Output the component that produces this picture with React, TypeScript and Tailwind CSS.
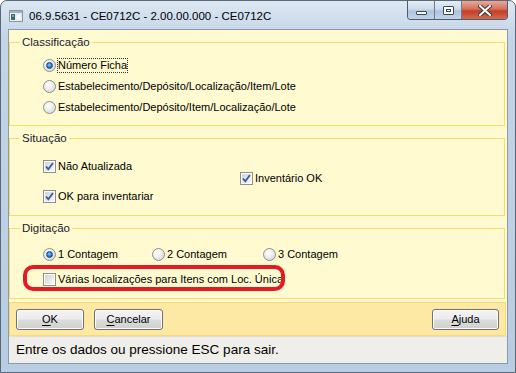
import React from 'react'

const ui = { fontFamily: '"Liberation Sans", Arial, sans-serif' }

function Radio({ checked, label, focus }: { checked?: boolean; label: string; focus?: boolean }) {
  return (
    <div className="flex items-center gap-[1px]">
      <span className="flex h-[13px] w-[13px] items-center justify-center rounded-full border border-[#8e8f8f] bg-[radial-gradient(circle_at_40%_35%,#ffffff_0%,#f2f2f2_35%,#cfcfcf_100%)]">
        {checked && (
          <span className="h-[7px] w-[7px] rounded-full border border-[#1c5180] bg-[radial-gradient(circle_at_45%_40%,#9fd2ff_0%,#2a85d6_45%,#0f4c8a_100%)]" />
        )}
      </span>
      <span
        className={
          focus
            ? 'border border-dotted border-[#333] px-0 leading-[13px]'
            : 'border border-transparent px-0 leading-[13px]'
        }
      >
        {label}
      </span>
    </div>
  )
}

function Check({ checked, label }: { checked?: boolean; label: string }) {
  return (
    <div className="flex items-center gap-[2px]">
      <span className="flex h-[13px] w-[13px] items-center justify-center border border-[#8e8f8f] bg-white p-[1px]">
        <span className="flex h-full w-full items-center justify-center bg-[linear-gradient(135deg,#d4d4d4,#f7f7f7)]">
          {checked && (
            <svg width="9" height="9" viewBox="0 0 9 9">
              <path d="M1 4.5 L3.3 7.2 L8 1" fill="none" stroke="#3a5c9e" strokeWidth="1.8" />
            </svg>
          )}
        </span>
      </span>
      <span className="leading-[13px]">{label}</span>
    </div>
  )
}

function Group({ title, children }: { title: string; children: React.ReactNode }) {
  return (
    <fieldset className="mr-[2px] border border-[#fbd96b]">
      <legend className="ml-[10px] px-[2px] text-[11.5px] leading-[16px] text-[#1b1b2e]">{title}</legend>
      {children}
    </fieldset>
  )
}

function Btn({ u, rest }: { u: string; rest: string }) {
  return (
    <button className="flex h-[21px] w-full items-center justify-center rounded-[3px] border border-[#707070] bg-[linear-gradient(#f3f3f3_0%,#ececec_48%,#dcdcdc_52%,#cfcfcf_100%)] text-[11px] leading-none text-black shadow-[inset_0_0_0_1px_#fcfcfc]">
      <span className="underline underline-offset-2">{u}</span>
      {rest}
    </button>
  )
}

export default function App() {
  return (
    <div
      className="flex h-[373px] w-[516px] flex-col overflow-hidden rounded-t-[7px] border border-[#5a6878] bg-[linear-gradient(#dce7f2_0%,#c3d5e8_10%,#b8cce2_100%)]"
      style={ui}
    >
      {/* title bar */}
      <div className="flex h-[28px] shrink-0 items-start justify-between pl-[8px] pr-[7px]">
        <div className="flex items-center gap-[6px] pt-[7px]">
          <svg width="14" height="12" viewBox="0 0 14 12">
            <rect x="0.5" y="0.5" width="13" height="11" fill="#f4f6f8" stroke="#8a96a2" />
            <rect x="1" y="1" width="12" height="2" fill="#9fb3c6" />
            <rect x="2" y="4" width="4" height="6" fill="#2f6d70" />
            <rect x="3" y="5" width="2" height="2" fill="#6fb0a8" />
            <rect x="7" y="4" width="5" height="6" fill="#ffffff" stroke="#c6ced6" strokeWidth="0.6" />
          </svg>
          <span className="text-[11.5px] leading-[16px] text-black">06.9.5631 - CE0712C - 2.00.00.000 - CE0712C</span>
        </div>
        <div className="flex h-[19px] overflow-hidden rounded-b-[4px] border border-t-0 border-[#4f5b6a]">
          <div className="flex w-[27px] items-center justify-center border-r border-[#6d7b8b] bg-[linear-gradient(#e5edf6_0%,#ccdbeb_45%,#aec4dc_55%,#c2d4e8_100%)]">
            <span className="mt-[5px] h-[4px] w-[11px] rounded-[1px] border border-[#3c4a5a] bg-white" />
          </div>
          <div className="flex w-[27px] items-center justify-center border-r border-[#6d7b8b] bg-[linear-gradient(#e5edf6_0%,#ccdbeb_45%,#aec4dc_55%,#c2d4e8_100%)]">
            <span className="flex h-[9px] w-[11px] items-center justify-center rounded-[1px] border border-[#3c4a5a] bg-white">
              <span className="h-[3px] w-[5px] border border-[#3c4a5a]" />
            </span>
          </div>
          <div className="flex w-[45px] items-center justify-center bg-[linear-gradient(#eaa898_0%,#d5705c_45%,#c33f2a_55%,#d46a4c_100%)]">
            <svg width="14" height="11" viewBox="0 0 14 11">
              <path d="M2 1 L12 10 M12 1 L2 10" stroke="#3c3c3c" strokeWidth="4" strokeLinecap="square" />
              <path d="M2 1 L12 10 M12 1 L2 10" stroke="#ffffff" strokeWidth="2" strokeLinecap="square" />
            </svg>
          </div>
        </div>
      </div>

      {/* client */}
      <div className="mx-[7px] flex flex-1 flex-col border border-[#8a9aaa] bg-[#fffad0]">
        <div className="flex flex-col gap-[4px] pt-[4px] text-[11px] text-black">
          <Group title="Classificação">
            <div className="flex flex-col pt-[5px] pb-[7px] pl-[33px]">
              <div className="flex h-[21px] items-center">
                <Radio checked focus label="Número Ficha" />
              </div>
              <div className="flex h-[21px] items-center">
                <Radio label="Estabelecimento/Depósito/Localização/Item/Lote" />
              </div>
              <div className="flex h-[21px] items-center">
                <Radio label="Estabelecimento/Depósito/Item/Localização/Lote" />
              </div>
            </div>
          </Group>

          <Group title="Situação">
            <div className="flex items-start pt-[10px] pb-[8px] pl-[33px]">
              <div className="flex w-[197px] flex-col gap-[9px]">
                <div className="flex h-[21px] items-center">
                  <Check checked label="Não Atualizada" />
                </div>
                <div className="flex h-[21px] items-center">
                  <Check checked label="OK para inventariar" />
                </div>
              </div>
              <div className="mt-[12px] flex h-[21px] items-center">
                <Check checked label="Inventário OK" />
              </div>
            </div>
          </Group>

          <Group title="Digitação">
            <div className="relative flex flex-col pt-[7px] pb-[5px] pl-[33px]">
              <div className="flex h-[22px] items-center">
                <div className="w-[109px]">
                  <Radio checked label="1 Contagem" />
                </div>
                <div className="w-[111px]">
                  <Radio label="2 Contagem" />
                </div>
                <Radio label="3 Contagem" />
              </div>
              <div className="flex h-[28px] items-center">
                <Check label="Várias localizações para Itens com Loc. Única" />
              </div>
              <div className="pointer-events-none absolute left-[13px] top-[29px] h-[26px] w-[262px] rounded-[10px] border-[4px] border-[#e41b23]" />
            </div>
          </Group>
        </div>

        {/* button bar */}
        <div className="mt-[3px] mr-[1px] flex h-[34px] items-center justify-between border border-[#fcd978] bg-[#fde9a4] pl-[6px] pr-[6px]">
          <div className="flex gap-[10px]">
            <div className="w-[68px]"><Btn u="O" rest="K" /></div>
            <div className="w-[69px]"><Btn u="C" rest="ancelar" /></div>
          </div>
          <div className="w-[67px]"><Btn u="A" rest="juda" /></div>
        </div>

        {/* status bar */}
        <div className="flex flex-1 items-center border-t border-[#e2dfd7] bg-[#f0eeea] pl-[7px] text-[13.5px] text-black">
          Entre os dados ou pressione ESC para sair.
        </div>
      </div>
      <div className="h-[8px] shrink-0" />
    </div>
  )
}
